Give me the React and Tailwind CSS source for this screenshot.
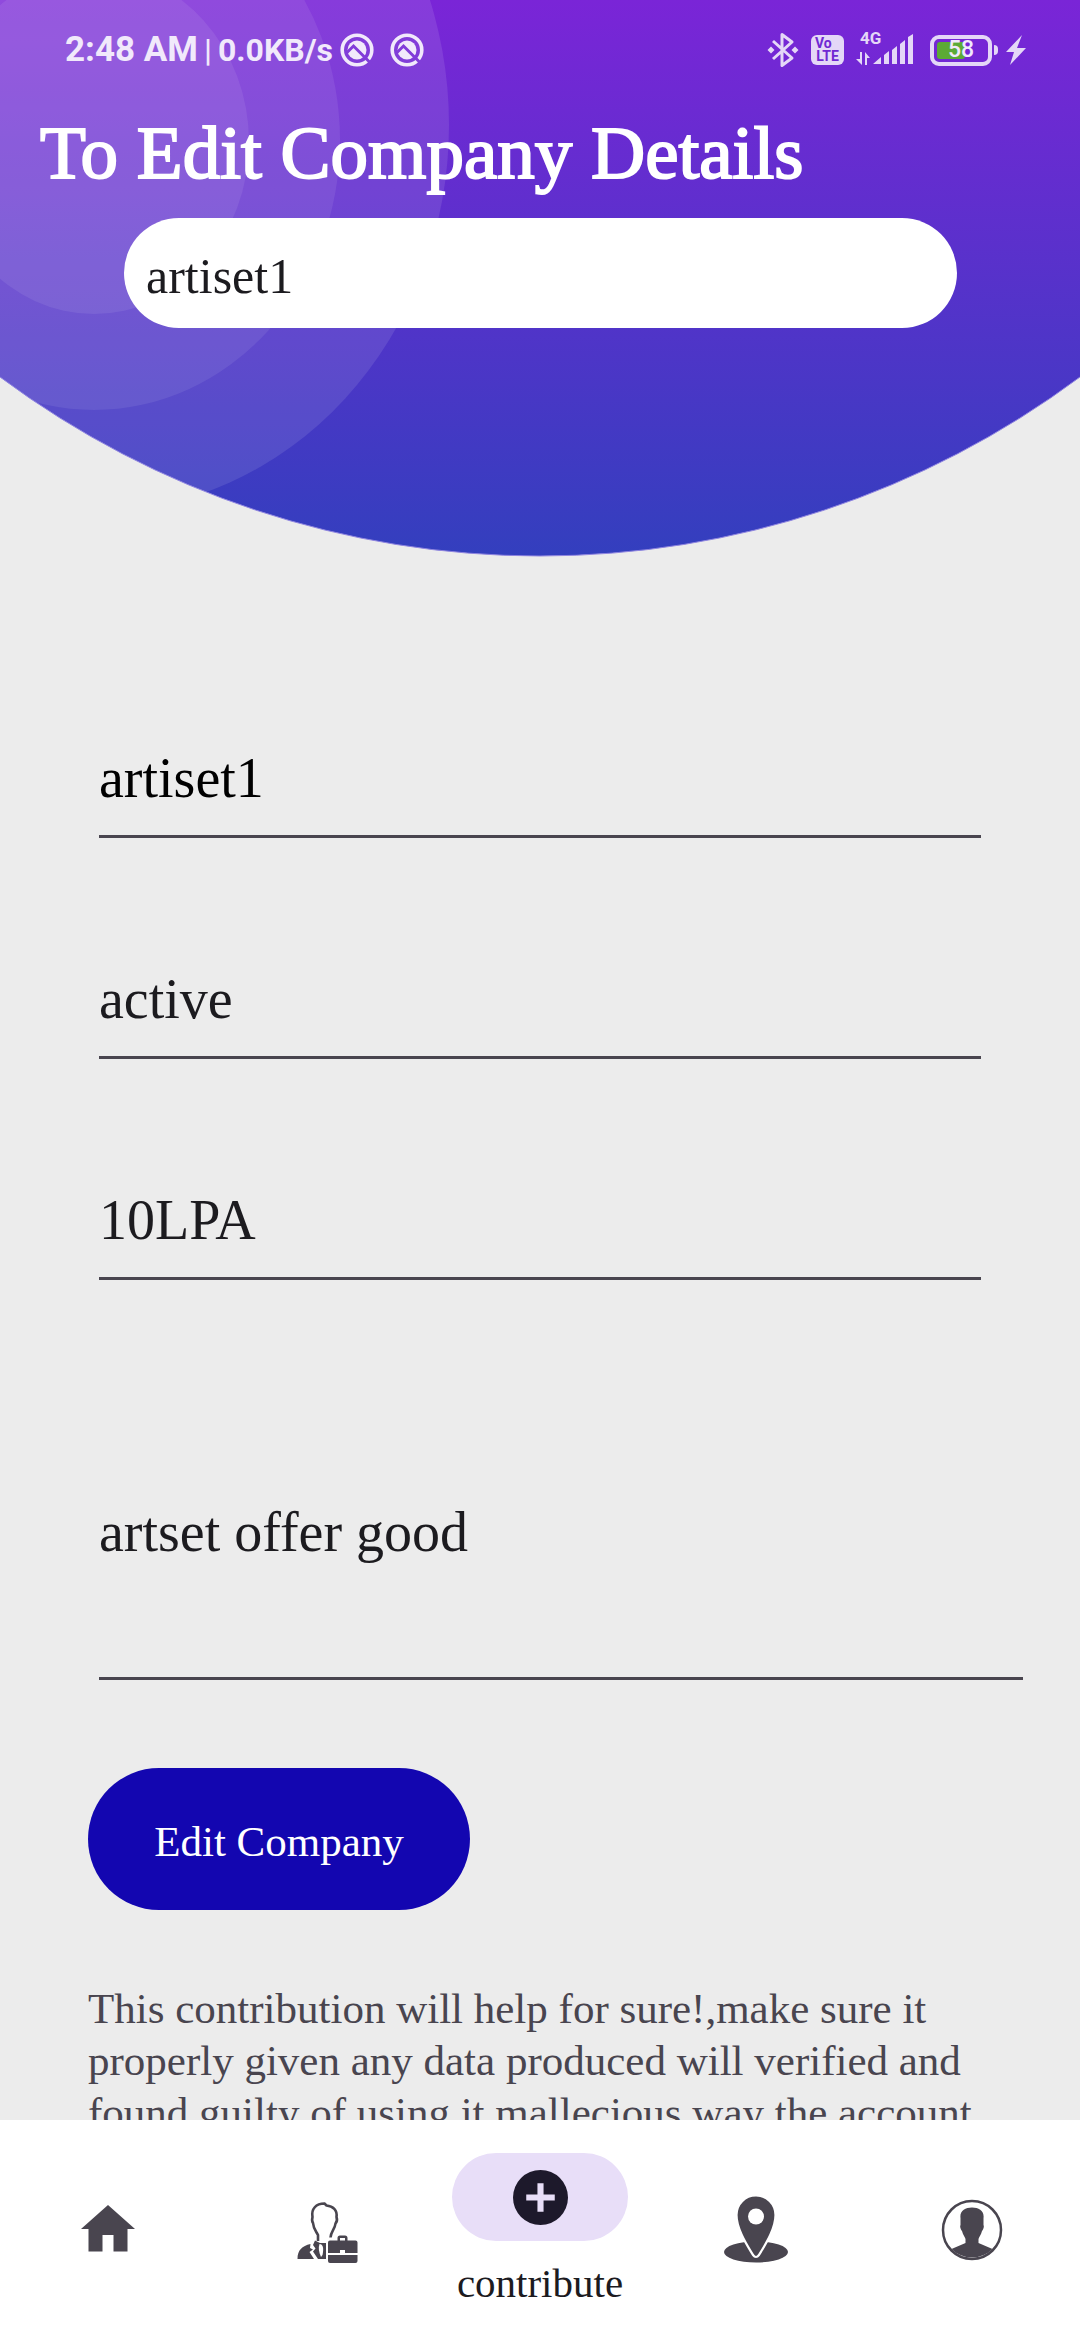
import React, { useId } from 'react';

const fields = [
  { id: 'company', label: 'Company name', value: 'artiset1', color: 'text-black' },
  { id: 'status', label: 'Status', value: 'active', color: 'text-[#1c1b1f]' },
  { id: 'salary', label: 'Salary', value: '10LPA', color: 'text-[#1c1b1f]' },
];

function HeaderArt() {
  return (
    <svg className="absolute inset-0 h-full w-full" viewBox="0 0 1080 557" preserveAspectRatio="none" aria-hidden="true">
      <defs>
        <linearGradient id="sky" x1="0" y1="0" x2="0" y2="1">
          <stop offset="0" stopColor="#7a25d7" />
          <stop offset="1" stopColor="#333fbe" />
        </linearGradient>
        <clipPath id="dome">
          <path d="M0 0H1080V377A904 904 0 0 1 0 377Z" />
        </clipPath>
      </defs>
      <g clipPath="url(#dome)">
        <rect width="1080" height="557" fill="url(#sky)" />
        <ellipse cx="94" cy="125" rx="355" ry="387" fill="#fff" fillOpacity=".1" />
        <ellipse cx="94" cy="140" rx="246" ry="270" fill="#fff" fillOpacity=".08" />
        <ellipse cx="94" cy="142" rx="155" ry="172" fill="#fff" fillOpacity=".08" />
      </g>
      <path d="M0 377A904 904 0 0 0 1080 377" fill="none" stroke="#8f85e0" strokeWidth="1" />
    </svg>
  );
}

function AppBadge() {
  const id = useId();
  return (
    <svg className="h-9 w-9" viewBox="0 0 36 36" aria-hidden="true">
      <mask id={id}>
        <rect width="36" height="36" fill="#fff" />
        <path d="M8 20.500L14.500 14L32 31.500" fill="none" stroke="#000" strokeWidth="3" />
      </mask>
      <g mask={`url(#${id})`}>
        <circle cx="18" cy="18" r="14.800" fill="none" stroke="#f1e9fb" strokeWidth="3.600" />
        <circle cx="18" cy="18" r="9.500" fill="#f1e9fb" />
      </g>
    </svg>
  );
}

function StatusBar() {
  return (
    <div className="flex h-[100px] items-center justify-between pr-[54px] pl-[65px] font-['Roboto',sans-serif] text-[#f1e9fb]">
      <div className="flex items-center">
        <span className="text-[35px] font-bold">2:48 AM</span>
        <span className="mx-1.5 text-[32px] font-medium">|</span>
        <span className="text-[32px] font-bold">0.0KB/s</span>
        <span className="ml-1.5 flex gap-[14px]"><AppBadge /><AppBadge /></span>
      </div>
      <div className="flex items-center gap-3">
        <svg className="h-9 w-8" viewBox="0 0 32 36" fill="none" stroke="#e4d7f7" strokeWidth="3" aria-hidden="true">
          <path d="M6 9L25 26L15 33.500V2.500L25 10L6 27" strokeLinejoin="round" />
          <path d="M4 14.500L7.500 18L4 21.500L.5 18ZM28 14.500L31.500 18L28 21.500L24.500 18Z" fill="#e4d7f7" stroke="none" />
        </svg>
        <span className="flex h-[30px] w-[33px] flex-col items-center justify-center rounded-[6px] bg-[#e4d7f7] text-[14px] leading-[13px] font-bold text-[#7028d3]">
          <span className="self-start pl-1">Vo</span><span>LTE</span>
        </span>
        <span className="relative h-9 w-[58px]">
          <span className="absolute -top-px left-1 text-[17px] leading-[14px] font-bold text-[#e4d7f7]">4G</span>
          <svg className="h-9 w-[58px]" viewBox="0 0 58 36" fill="#e4d7f7" aria-hidden="true">
            <path d="M4 20H6V33L0 27H4ZM9 33V20L14 26H11V33ZM17 32L25 25V32ZM28 23L33 19V32H28ZM36 18L41 14V32H36ZM44 12L49 8V32H44ZM52 5L57 2V32H52Z" />
          </svg>
        </span>
        <span className="ml-1 flex items-center">
          <span className="relative flex h-[31px] w-[62px] items-center justify-center rounded-[9px] border-4 border-[#e4d7f7]">
            <span className="absolute top-[3px] left-[3px] h-[17px] w-7 rounded-[3px] bg-[#5caa36]" />
            <span className="relative text-[23px] leading-6 font-medium">58</span>
          </span>
          <span className="ml-[2px] h-[10px] w-1 rounded-r bg-[#e4d7f7]" />
          <svg className="ml-2 h-[30px] w-5" viewBox="0 0 20 30" fill="#e4d7f7" aria-hidden="true">
            <path d="M16 0L0 17H8L4 30L20 13H11Z" />
          </svg>
        </span>
      </div>
    </div>
  );
}

function HomeIcon() {
  return (
    <svg className="h-[72px] w-[72px]" viewBox="0 0 72 72" fill="#49454f" aria-hidden="true">
      <path d="M36 11L63 35H55.500V57.500H41.500V41H30.500V57.500H16.500V35H9Z" />
    </svg>
  );
}

function WorkerIcon() {
  return (
    <svg className="h-[72px] w-[72px]" viewBox="0 0 72 72" fill="#49454f" aria-hidden="true">
      <path d="M30 47V41C28 37 25.500 35 25 29C23.500 27 24 25 24.500 23C23 15 28 9.500 36.500 9.500L38.500 11.500C45 12 49.500 16 48.500 23C49.500 26 49 28 47.500 29.500C47 35 43 37 42.500 43.500" fill="none" stroke="#49454f" strokeWidth="2.600" />
      <path d="M9.500 65C9.500 56 14 52 22.500 50L22 54L25 55.500L21.500 58L26 65Z" />
      <path d="M27 46.500L32 49H38V65H30L25 57.500L27.500 54.500L25 51Z" />
      <path d="M31.500 50C35 50 36 54 34.500 61L33 63C31 58 30 54 31.500 50Z" fill="#fff" />
      <path d="M42 46.500H49.500V44Q49.500 41.500 52 41.500H57Q59.500 41.500 59.500 44V46.500H67.500Q69.500 46.500 69.500 48.500V59H57V56H52V59H40V48.500Q40 46.500 42 46.500ZM52 46.500H57V44H52ZM40 61H69.500V67Q69.500 69 67.500 69H42Q40 69 40 67Z" fillRule="evenodd" />
    </svg>
  );
}

function PinIcon() {
  return (
    <svg className="h-[72px] w-[72px]" viewBox="0 0 72 72" fill="#49454f" aria-hidden="true">
      <ellipse cx="36" cy="58" rx="32" ry="10.500" />
      <path d="M36 1.500C25 1.500 16.500 10 16.500 21C16.500 35 27 51 33 61Q36 65 39 61C45 51 55.500 35 55.500 21C55.500 10 47 1.500 36 1.500Z" stroke="#fff" strokeWidth="2.200" />
      <circle cx="36" cy="22.500" r="8" fill="#fff" />
    </svg>
  );
}

function ProfileIcon() {
  return (
    <svg className="h-[72px] w-[72px]" viewBox="0 0 72 72" fill="#49454f" aria-hidden="true">
      <circle cx="36" cy="36" r="29" fill="none" stroke="#49454f" strokeWidth="2.500" />
      <path d="M24.500 24C23.500 17 29 13.500 36 13.500C43 13.500 48.500 17 47.500 24V31C48.500 33 47 36 46 37C45 41 43 43 42.500 45V49L56.500 55A29 29 0 0 1 15.500 55L29.500 49V45C29 43 27 41 26 37C25 36 23.500 33 24.500 31Z" />
    </svg>
  );
}

function NavItem({ label, children }) {
  return (
    <button type="button" aria-label={label} className="flex flex-1 justify-center pt-[74px]">{children}</button>
  );
}

export default function App() {
  return (
    <div className="flex h-screen flex-col overflow-hidden bg-[#ececec] font-['Liberation_Serif',serif]">
      <main className="min-h-0 flex-1 overflow-hidden">
        <header className="relative h-[557px]">
          <HeaderArt />
          <div className="relative">
            <StatusBar />
            <h1 className="pl-10 text-[75px] leading-[106px] whitespace-nowrap text-white [-webkit-text-stroke:2px_white]">To Edit Company Details</h1>
            <input aria-label="Search company" defaultValue="artiset1" className="mx-[124px] mt-3 block h-[110px] w-[calc(100%-247px)] rounded-full bg-white px-[22px] pt-1.5 text-[50px] text-[#1c1b1f]" />
          </div>
        </header>
        <form className="pt-[120px]" onSubmit={(e) => e.preventDefault()}>
          <div className="mx-[99px] flex flex-col gap-[60px]">
            {fields.map((f) => (
              <input key={f.id} aria-label={f.label} defaultValue={f.value} className={`h-[161px] w-full border-b-3 border-[#49454f] bg-transparent pt-11 text-[56px] ${f.color}`} />
            ))}
          </div>
          <textarea aria-label="Description" defaultValue="artset offer good" className="mr-[57px] ml-[99px] mt-[200px] block h-[200px] w-[calc(100%-156px)] resize-none border-b-3 border-[#49454f] bg-transparent pt-4 text-[56px] leading-[72px] text-[#1c1b1f]" />
          <button type="submit" className="mt-[88px] ml-[88px] h-[142px] w-[382px] rounded-full bg-[#1306b0] pt-1.5 text-[43px] text-white">Edit Company</button>
          <p className="mt-[73px] mr-[60px] ml-[88px] text-[43px] leading-[52px] text-[#49454f]">
            This contribution will help for sure!,make sure it<br />properly given any data produced will verified and<br />found guilty of using it mallecious way the account
          </p>
        </form>
      </main>
      <nav className="flex h-[220px] shrink-0 bg-white">
        <NavItem label="Home"><HomeIcon /></NavItem>
        <NavItem label="Jobs"><WorkerIcon /></NavItem>
        <button type="button" className="flex flex-1 flex-col items-center pt-[33px]">
          <span className="flex h-[88px] w-44 items-center justify-center rounded-full bg-[#e8def8]">
            <svg className="h-[55px] w-[55px]" viewBox="0 0 54 54" aria-hidden="true">
              <circle cx="27" cy="27" r="27" fill="#1d192b" />
              <path d="M27 13V41M13 27H41" stroke="#e8def8" strokeWidth="6" />
            </svg>
          </span>
          <span className="mt-5 text-[41px] leading-[44px] text-[#1c1b1f]">contribute</span>
        </button>
        <NavItem label="Places"><PinIcon /></NavItem>
        <NavItem label="Profile"><ProfileIcon /></NavItem>
      </nav>
    </div>
  );
}
